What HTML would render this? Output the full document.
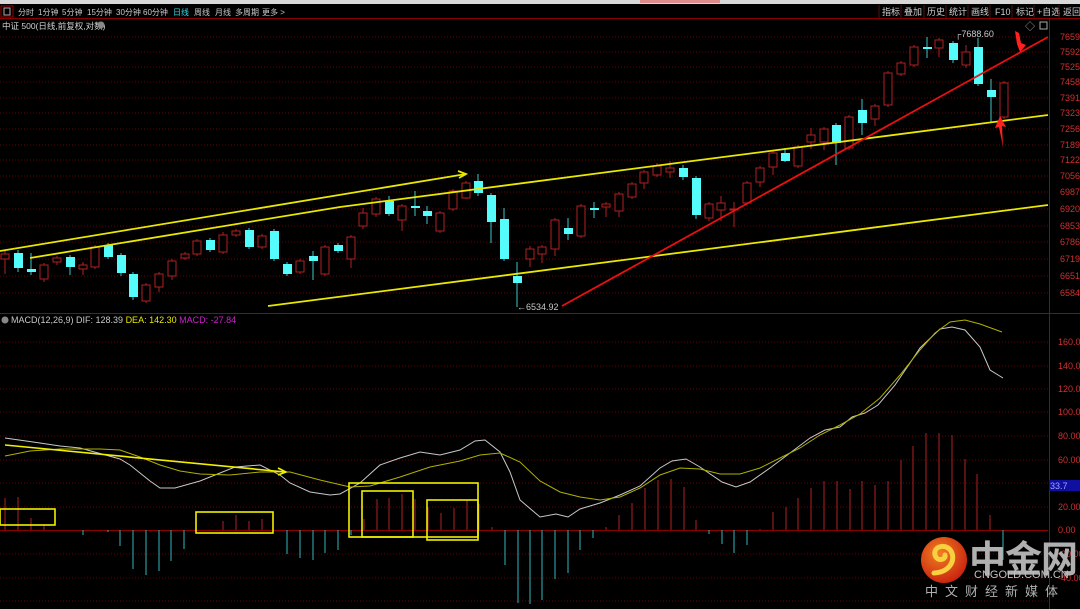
<!DOCTYPE html>
<html><head><meta charset="utf-8"><style>
html,body{margin:0;padding:0;background:#000;}
body{width:1080px;height:609px;overflow:hidden;position:relative;font-family:"Liberation Sans","Noto Sans CJK SC",sans-serif;}
svg{position:absolute;left:0;top:0}
text{font-family:"Liberation Sans","Noto Sans CJK SC",sans-serif}
</style></head><body>
<svg width="1080" height="609" viewBox="0 0 1080 609">
<rect width="1080" height="609" fill="#000"/>
<rect x="0" y="0" width="1080" height="4" fill="#d8d8d8"/>
<rect x="640" y="0" width="80" height="3" fill="#e04040" opacity="0.5"/>
<line x1="0" y1="18.5" x2="1080" y2="18.5" stroke="#8a0000"/>
<rect x="1" y="6" width="12" height="11" fill="none" stroke="#a00000"/>
<rect x="4" y="8" width="6" height="7" fill="none" stroke="#aaa"/>
<g font-size="8" fill="#c8c8c8">
<text x="18" y="15">分时</text><text x="38" y="15">1分钟</text><text x="62" y="15">5分钟</text><text x="87" y="15">15分钟</text><text x="116" y="15">30分钟</text><text x="143" y="15">60分钟</text><text x="173" y="15" fill="#3cd8e0">日线</text><text x="194" y="15">周线</text><text x="215" y="15">月线</text><text x="235" y="15">多周期</text><text x="262" y="15">更多 &gt;</text>
</g>
<g font-size="9" fill="#d0d0d0">
<text x="882" y="15">指标</text><text x="904" y="15">叠加</text><text x="927" y="15">历史</text><text x="949" y="15">统计</text><text x="971" y="15">画线</text><text x="995" y="15">F10</text><text x="1016" y="15">标记</text><text x="1037" y="15">+自选</text><text x="1063" y="15">返回</text>
</g>
<g stroke="#501010"><line x1="879" y1="5" x2="879" y2="18"/><line x1="901" y1="5" x2="901" y2="18"/><line x1="924" y1="5" x2="924" y2="18"/><line x1="946" y1="5" x2="946" y2="18"/><line x1="968" y1="5" x2="968" y2="18"/><line x1="990" y1="5" x2="990" y2="18"/><line x1="1012" y1="5" x2="1012" y2="18"/><line x1="1034" y1="5" x2="1034" y2="18"/><line x1="1059" y1="5" x2="1059" y2="18"/></g>
<text x="2" y="29" font-size="8.5" fill="#d0d0d0">中证 500(日线,前复权,对数)</text>
<circle cx="101" cy="25" r="3.5" fill="#888"/>
<text x="1025" y="30" font-size="10" fill="#aaa">◇</text>
<rect x="1040" y="22" width="7" height="7" fill="none" stroke="#aaa"/>

<g stroke="#6a0000" stroke-dasharray="1,2">
<line x1="0" y1="37" x2="1048" y2="37"/><line x1="0" y1="52" x2="1048" y2="52"/><line x1="0" y1="67" x2="1048" y2="67"/><line x1="0" y1="82" x2="1048" y2="82"/><line x1="0" y1="98" x2="1048" y2="98"/><line x1="0" y1="113" x2="1048" y2="113"/><line x1="0" y1="129" x2="1048" y2="129"/><line x1="0" y1="145" x2="1048" y2="145"/><line x1="0" y1="160" x2="1048" y2="160"/><line x1="0" y1="176" x2="1048" y2="176"/><line x1="0" y1="192" x2="1048" y2="192"/><line x1="0" y1="209" x2="1048" y2="209"/><line x1="0" y1="226" x2="1048" y2="226"/><line x1="0" y1="242" x2="1048" y2="242"/><line x1="0" y1="259" x2="1048" y2="259"/><line x1="0" y1="276" x2="1048" y2="276"/><line x1="0" y1="293" x2="1048" y2="293"/>
</g>
<g font-size="9" fill="#d03030">
<text x="1060" y="40">7659</text><text x="1060" y="55">7592</text><text x="1060" y="70">7525</text><text x="1060" y="85">7458</text><text x="1060" y="101">7391</text><text x="1060" y="116">7323</text><text x="1060" y="132">7256</text><text x="1060" y="148">7189</text><text x="1060" y="163">7122</text><text x="1060" y="179">7056</text><text x="1060" y="195">6987</text><text x="1060" y="212">6920</text><text x="1060" y="229">6853</text><text x="1060" y="245">6786</text><text x="1060" y="262">6719</text><text x="1060" y="279">6651</text><text x="1060" y="296">6584</text>
</g>
<line x1="1049.5" y1="19" x2="1049.5" y2="609" stroke="#a00000"/>

<path stroke="#b02020" fill="none" d="M5 250V274M44 263V282M57 256V265M83 262V275M95 245V269M146 283V303M159 272V292M172 259V280M185 252V260M197 239V256M223 232V254M236 229V237M262 234V249M300 259V274M325 245V276M351 235V268M363 208V229M376 197V217M402 204V231M440 211V233M453 189V211M466 181V199M530 246V267M542 245V263M555 218V256M581 204V238M606 202V217M619 192V217M632 182V199M644 170V189M657 163V177M670 161V178M709 202V221M721 196V221M734 202V227M747 181V205M760 166V187M773 151V175M798 145V168M811 128V149M824 127V150M849 115V150M875 104V126M888 71V107M901 61V76M914 45V67M939 38V57M966 45V68M1004 81V119"/>
<path stroke="#3cc8c8" fill="none" d="M18 250V272M31 253V275M70 255V275M108 243V259M121 253V276M133 272V300M210 238V252M249 228V249M274 229V261M287 262V276M313 251V280M338 243V253M389 196V216M415 191V216M427 206V224M478 174V196M491 193V243M504 208V261M517 262V307M568 218V240M594 202V218M683 165V180M696 176V219M785 148V162M836 123V165M862 99V135M927 37V58M953 41V63M978 38V86M991 79V122"/>
<g fill="#000" stroke="#b02020">
<rect x="1" y="254" width="8" height="5"/><rect x="40" y="265" width="8" height="14"/><rect x="53" y="258" width="8" height="4"/><rect x="79" y="265" width="8" height="4"/><rect x="91" y="247" width="8" height="20"/><rect x="142" y="285" width="8" height="16"/><rect x="155" y="274" width="8" height="13"/><rect x="168" y="261" width="8" height="15"/><rect x="181" y="254" width="8" height="4"/><rect x="193" y="241" width="8" height="13"/><rect x="219" y="235" width="8" height="17"/><rect x="232" y="231" width="8" height="4"/><rect x="258" y="236" width="8" height="11"/><rect x="296" y="261" width="8" height="11"/><rect x="321" y="247" width="8" height="27"/><rect x="347" y="237" width="8" height="22"/><rect x="359" y="213" width="8" height="13"/><rect x="372" y="199" width="8" height="15"/><rect x="398" y="206" width="8" height="14"/><rect x="436" y="213" width="8" height="18"/><rect x="449" y="191" width="8" height="18"/><rect x="462" y="183" width="8" height="15"/><rect x="526" y="249" width="8" height="10"/><rect x="538" y="247" width="8" height="7"/><rect x="551" y="220" width="8" height="29"/><rect x="577" y="206" width="8" height="30"/><rect x="602" y="204" width="8" height="3"/><rect x="615" y="194" width="8" height="17"/><rect x="628" y="184" width="8" height="13"/><rect x="640" y="172" width="8" height="11"/><rect x="653" y="166" width="8" height="9"/><rect x="666" y="168" width="8" height="4"/><rect x="705" y="204" width="8" height="14"/><rect x="717" y="203" width="8" height="7"/><rect x="730" y="209" width="8" height="1"/><rect x="743" y="183" width="8" height="20"/><rect x="756" y="168" width="8" height="14"/><rect x="769" y="153" width="8" height="14"/><rect x="794" y="147" width="8" height="19"/><rect x="807" y="135" width="8" height="7"/><rect x="820" y="129" width="8" height="13"/><rect x="845" y="117" width="8" height="31"/><rect x="871" y="106" width="8" height="13"/><rect x="884" y="73" width="8" height="32"/><rect x="897" y="63" width="8" height="11"/><rect x="910" y="47" width="8" height="18"/><rect x="935" y="40" width="8" height="8"/><rect x="962" y="52" width="8" height="13"/><rect x="1000" y="83" width="8" height="34"/>
</g>
<g fill="#54fcfc">
<rect x="14" y="253" width="9" height="15"/><rect x="27" y="269" width="9" height="3"/><rect x="66" y="257" width="9" height="10"/><rect x="104" y="245" width="9" height="12"/><rect x="117" y="255" width="9" height="18"/><rect x="129" y="274" width="9" height="23"/><rect x="206" y="240" width="9" height="10"/><rect x="245" y="230" width="9" height="17"/><rect x="270" y="231" width="9" height="28"/><rect x="283" y="264" width="9" height="10"/><rect x="309" y="256" width="9" height="5"/><rect x="334" y="245" width="9" height="6"/><rect x="385" y="201" width="9" height="13"/><rect x="411" y="206" width="9" height="2"/><rect x="423" y="211" width="9" height="5"/><rect x="474" y="181" width="9" height="12"/><rect x="487" y="195" width="9" height="27"/><rect x="500" y="219" width="9" height="40"/><rect x="513" y="276" width="9" height="7"/><rect x="564" y="228" width="9" height="6"/><rect x="590" y="208" width="9" height="2"/><rect x="679" y="168" width="9" height="9"/><rect x="692" y="178" width="9" height="37"/><rect x="781" y="153" width="9" height="8"/><rect x="832" y="125" width="9" height="18"/><rect x="858" y="110" width="9" height="13"/><rect x="923" y="47" width="9" height="2"/><rect x="949" y="43" width="9" height="17"/><rect x="974" y="47" width="9" height="37"/><rect x="987" y="90" width="9" height="7"/>
</g>
<g fill="none" stroke-width="1.8">
<polyline stroke="#e8e800" points="0,251 466,174"/>
<polyline stroke="#e8e800" points="30,258 340,207 700,160 1048,115"/>
<polyline stroke="#e8e800" points="268,306 1048,205"/>
<polyline stroke="#e81010" points="562,306 1048,37"/>
</g>
<path d="M458 171 L466 174 L459 178" fill="none" stroke="#e8e800" stroke-width="1.8"/>
<polygon points="1015,31 1019,33 1021,43 1026,45 1020,52 1017,44" fill="#ff2020"/>
<polygon points="1000,116 1006,127 1002,126 1003,147 999,127 995,128" fill="#ff2020"/>
<text x="955" y="37" font-size="9" fill="#c8c8c8">┌7688.60</text>
<text x="517" y="310" font-size="9" fill="#c8c8c8">←6534.92</text>

<line x1="0" y1="313.5" x2="1080" y2="313.5" stroke="#a00000"/>
<circle cx="5" cy="320" r="3.5" fill="#888"/>
<text x="11" y="323" font-size="9" fill="#c8c8c8">MACD(12,26,9) DIF: 128.39 <tspan fill="#e8e800">DEA: 142.30</tspan> <tspan fill="#d020d0">MACD: -27.84</tspan></text>
<g stroke="#6a0000" stroke-dasharray="1,2">
<line x1="0" y1="342" x2="1048" y2="342"/><line x1="0" y1="366" x2="1048" y2="366"/><line x1="0" y1="389" x2="1048" y2="389"/><line x1="0" y1="412" x2="1048" y2="412"/><line x1="0" y1="436" x2="1048" y2="436"/><line x1="0" y1="460" x2="1048" y2="460"/><line x1="0" y1="483" x2="1048" y2="483"/><line x1="0" y1="507" x2="1048" y2="507"/><line x1="0" y1="554" x2="1048" y2="554"/><line x1="0" y1="578" x2="1048" y2="578"/><line x1="0" y1="601" x2="1048" y2="601"/>
</g>
<line x1="0" y1="530.5" x2="1048" y2="530.5" stroke="#8a0000"/>
<g font-size="9" fill="#d03030">
<text x="1058" y="345">160.0</text><text x="1058" y="369">140.0</text><text x="1058" y="392">120.0</text><text x="1058" y="415">100.0</text><text x="1058" y="439">80.00</text><text x="1058" y="463">60.00</text><text x="1058" y="510">20.00</text><text x="1058" y="533">0.00</text><text x="1058" y="557">-20.00</text><text x="1058" y="581">-40.00</text>
</g>
<rect x="1049" y="480" width="31" height="11" fill="#1010a0"/>
<text x="1050" y="489" font-size="9" fill="#a0a0ff">33.7</text>
<path stroke="#b02020" d="M5 530V498M18 530V497M31 530V518M44 530V525M223 530V521M236 530V515M249 530V521M262 530V519M364 530V519M377 530V499M389 530V498M402 530V494M415 530V499M428 530V507M441 530V513M454 530V508M467 530V500M479 530V504M492 530V527M606 530V527M619 530V515M632 530V503M645 530V488M658 530V480M671 530V479M684 530V487M696 530V520M760 530V529M773 530V512M786 530V507M798 530V498M811 530V488M824 530V481M837 530V481M850 530V489M862 530V481M875 530V485M888 530V481M901 530V460M913 530V446M926 530V433M939 530V433M952 530V435M965 530V459M977 530V474M990 530V515"/>
<path stroke="#30b8c0" d="M83 530V535M108 530V532M120 530V546M133 530V569M146 530V575M159 530V571M171 530V561M184 530V549M287 530V554M300 530V558M313 530V560M325 530V553M338 530V550M351 530V535M505 530V565M518 530V603M530 530V604M542 530V600M555 530V579M568 530V573M580 530V550M593 530V538M709 530V534M722 530V544M734 530V553M747 530V545M1003 530V560"/>
<polyline fill="none" stroke="#c8c8c8" stroke-width="1" points="5,438 40,443 60,446 80,448 120,459 130,465 150,481 160,488 175,488 200,481 215,475 235,467 260,465 280,475 290,483 310,492 330,495 340,494 360,483 380,465 400,458 420,452 440,455 460,450 475,441 485,440 500,452 510,472 520,500 540,517 556,514 568,517 580,509 600,503 620,495 640,486 660,468 672,461 686,459 700,467 722,482 736,487 750,482 770,468 790,453 810,438 825,430 840,427 852,417 865,413 878,405 895,385 910,363 920,348 940,329 952,327 965,330 980,347 990,370 1003,378"/>
<polyline fill="none" stroke="#b0b000" stroke-width="1" points="5,456 30,451 60,449 100,449 120,450 140,457 160,465 180,471 200,474 230,475 260,472 290,472 320,480 350,487 370,486 400,477 430,467 460,461 480,455 500,453 520,462 540,481 560,492 580,497 600,500 620,497 640,488 660,475 680,468 700,469 720,474 740,474 760,468 780,458 800,448 820,435 840,425 860,414 880,398 900,375 920,350 935,333 950,322 965,320 980,324 1002,332"/>
<g fill="none" stroke="#f0f000" stroke-width="1.6">
<line x1="5" y1="445" x2="285" y2="472"/>
<path d="M278 468 L286 472 L278 475"/>
<rect x="0" y="509" width="55" height="16"/>
<rect x="196" y="512" width="77" height="21"/>
<rect x="349" y="483" width="129" height="54"/>
<rect x="362" y="491" width="51" height="46"/>
<rect x="427" y="500" width="51" height="40"/>
</g>
<defs><radialGradient id="g" cx="0.4" cy="0.35" r="0.7"><stop offset="0" stop-color="#f08020"/><stop offset="1" stop-color="#c82010"/></radialGradient></defs>
<circle cx="944" cy="560" r="23" fill="url(#g)"/>
<path d="M934 573 C950 572 956 560 951 551 C946 543 933 546 935 555 C937 562 946 560 945 555" fill="none" stroke="#f8d040" stroke-width="5" stroke-linecap="round"/>
</svg>
<div style="position:absolute;left:969px;top:534px;font-size:37px;font-weight:bold;color:#b0b0b0;font-family:'Noto Sans CJK SC',sans-serif;letter-spacing:-1px;line-height:44px">中金网</div>
<div style="position:absolute;left:974px;top:569px;font-size:11px;color:#c0c0c0;line-height:12px">CNGOLD.COM.CN</div>
<div style="position:absolute;left:925px;top:583px;font-size:13px;color:#b0b0b0;letter-spacing:7px;line-height:16px;font-family:'Noto Sans CJK SC',sans-serif">中文财经新媒体</div>
</body></html>
